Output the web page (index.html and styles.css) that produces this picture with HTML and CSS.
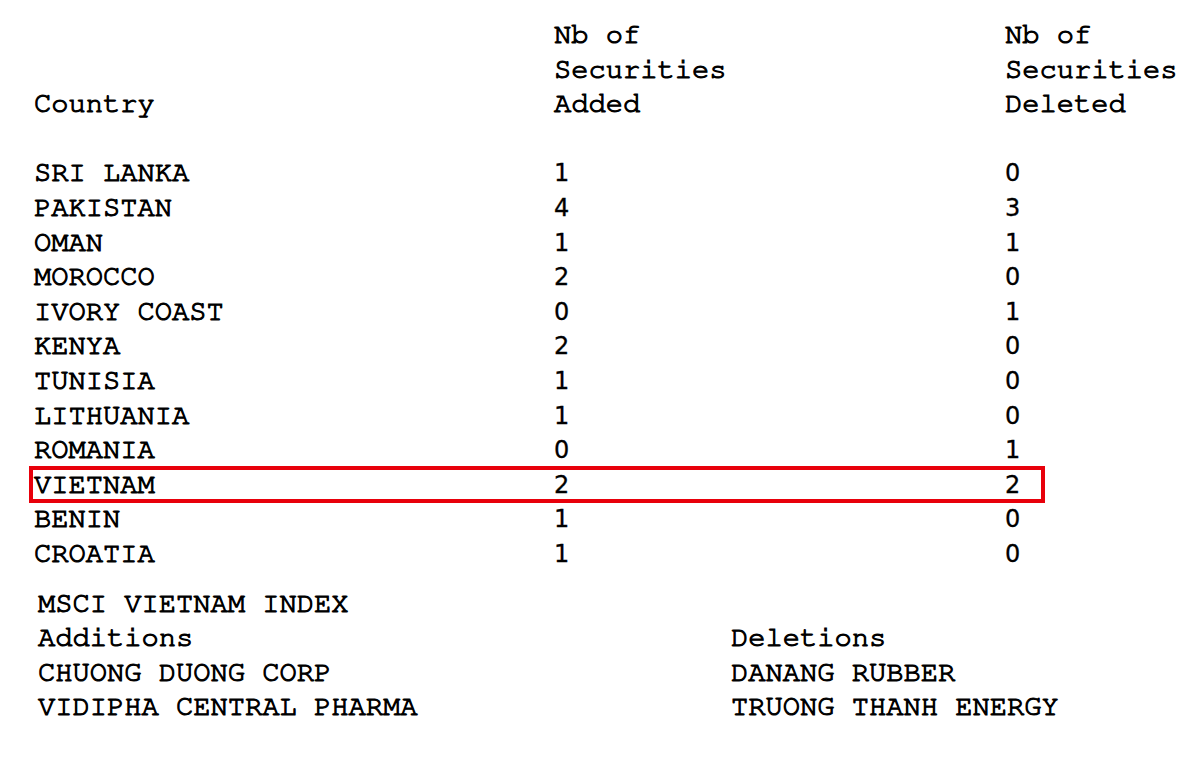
FILE: index.html
```html
<!DOCTYPE html>
<html>
<head>
<meta charset="utf-8">
<link rel="stylesheet" href="styles.css">
</head>
<body>
<div class="page">
  <div class="table">
    <div class="row head">
      <div class="c1"><br><br>Country</div>
      <div class="c2">Nb of<br>Securities<br>Added</div>
      <div class="c3">Nb of<br>Securities<br>Deleted</div>
    </div>
    <div class="row blank"><div class="c1">&nbsp;</div></div>
    <div class="row"><div class="c1">SRI LANKA</div><div class="c2 num">1</div><div class="c3 num">0</div></div>
    <div class="row"><div class="c1">PAKISTAN</div><div class="c2 num">4</div><div class="c3 num">3</div></div>
    <div class="row"><div class="c1">OMAN</div><div class="c2 num">1</div><div class="c3 num">1</div></div>
    <div class="row"><div class="c1">MOROCCO</div><div class="c2 num">2</div><div class="c3 num">0</div></div>
    <div class="row"><div class="c1">IVORY COAST</div><div class="c2 num">0</div><div class="c3 num">1</div></div>
    <div class="row"><div class="c1">KENYA</div><div class="c2 num">2</div><div class="c3 num">0</div></div>
    <div class="row"><div class="c1">TUNISIA</div><div class="c2 num">1</div><div class="c3 num">0</div></div>
    <div class="row"><div class="c1">LITHUANIA</div><div class="c2 num">1</div><div class="c3 num">0</div></div>
    <div class="row"><div class="c1">ROMANIA</div><div class="c2 num">0</div><div class="c3 num">1</div></div>
    <div class="row highlight"><div class="c1">VIETNAM</div><div class="c2 num">2</div><div class="c3 num">2</div></div>
    <div class="row"><div class="c1">BENIN</div><div class="c2 num">1</div><div class="c3 num">0</div></div>
    <div class="row"><div class="c1">CROATIA</div><div class="c2 num">1</div><div class="c3 num">0</div></div>
  </div>
  <div class="index">
    <div class="title">MSCI VIETNAM INDEX</div>
    <div class="lists">
      <div class="list">
        <div>Additions</div>
        <div>CHUONG DUONG CORP</div>
        <div>VIDIPHA CENTRAL PHARMA</div>
      </div>
      <div class="list">
        <div>Deletions</div>
        <div>DANANG RUBBER</div>
        <div>TRUONG THANH ENERGY</div>
      </div>
    </div>
  </div>
</div>
</body>
</html>
```

FILE: styles.css
```css
html, body {
  margin: 0;
  padding: 0;
  background: #ffffff;
}
.page {
  font-family: "Nimbus Mono PS", "Nimbus Mono L", "FreeMono", "Courier", "Courier New", "Liberation Mono", monospace;
  font-size: 28.75px;
  line-height: 34.6px;
  color: #000000;
  -webkit-text-stroke: 1.1px #000000;
  padding: 18px 0 0 34px;
}
.table {
  display: flex;
  flex-direction: column;
}
.row {
  display: grid;
  grid-template-columns: 520px 451px auto;
  position: relative;
  height: 34.6px;
}
.row.head {
  height: auto;
}
.num {
  font-family: "DejaVu Sans", sans-serif;
  font-size: 24px;
  -webkit-text-stroke: 0.3px #000000;
}
.highlight::after {
  content: "";
  position: absolute;
  left: -5px;
  top: -2px;
  width: 1016px;
  height: 37px;
  box-sizing: border-box;
  border: 4px solid #e8000b;
}
.index {
  padding: 15px 0 0 4px;
}
.lists {
  display: grid;
  grid-template-columns: 693px auto;
}
.list {
  display: flex;
  flex-direction: column;
}
```
